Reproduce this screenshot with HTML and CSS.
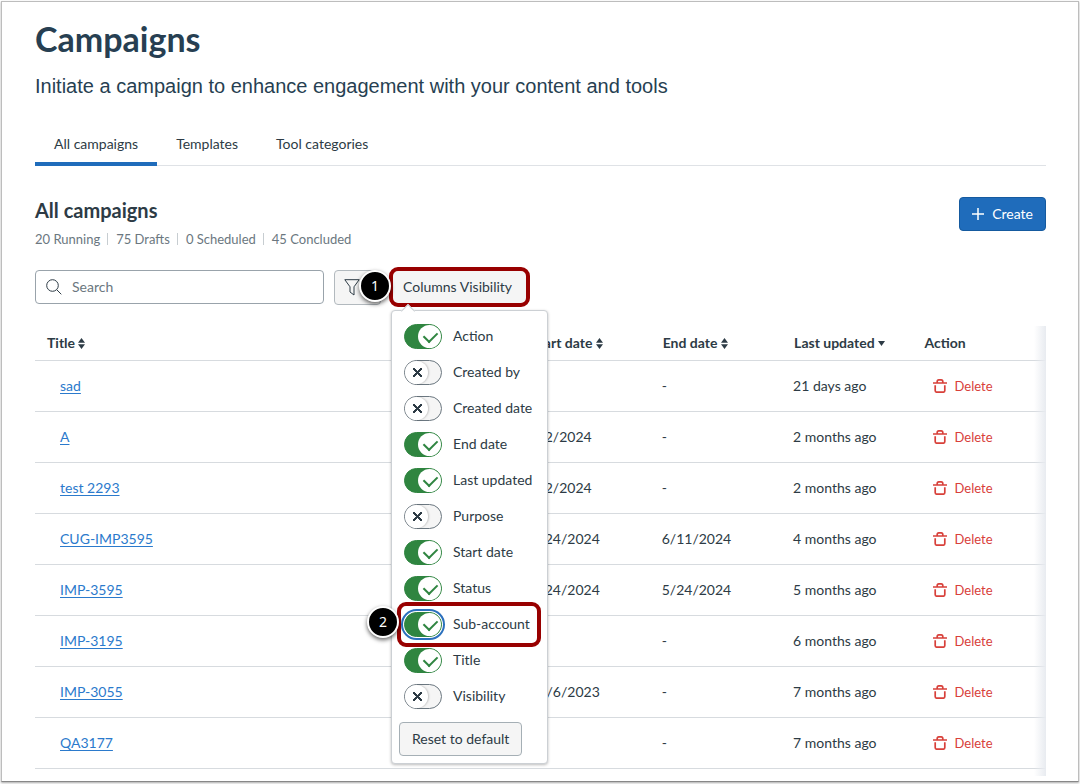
FILE: index.html
```html
<!DOCTYPE html>
<html lang="en">
<head>
<meta charset="utf-8">
<title>Campaigns</title>
<link rel="stylesheet" href="styles.css">
</head>
<body>
<svg class="defs" aria-hidden="true">
  <symbol id="sort" viewBox="0 0 7 11"><path d="M3.500 0 7 4.700H0zM3.500 11 0 6.300h7z"/></symbol>
  <symbol id="trash" viewBox="0 0 14 14"><path d="M0 4h14M4.200 3.800V2.600Q4.200.9 5.800.9h2.400q1.600 0 1.600 1.700v1.200M2.200 6.200v5.200q0 1.800 1.800 1.800h6q1.800 0 1.800-1.800V6.200" fill="none" stroke="currentColor" stroke-width="1.700"/></symbol>
</svg>
<main class="frame">
  <header class="page-head">
    <h1>Campaigns</h1>
    <p class="lead">Initiate a campaign to enhance engagement with your content and tools</p>
  </header>
  <nav class="tabs">
    <a class="tab active" href="#all">All campaigns</a>
    <a class="tab" href="#templates">Templates</a>
    <a class="tab" href="#tools">Tool categories</a>
  </nav>
  <section class="summary">
    <div>
      <h2>All campaigns</h2>
      <ul class="counts"><li>20 Running</li><li>75 Drafts</li><li>0 Scheduled</li><li>45 Concluded</li></ul>
    </div>
    <button class="create" type="button"><svg width="12" height="12" viewBox="0 0 12 12"><path d="M6 0v12M0 6h12" stroke="currentColor" stroke-width="1.500"/></svg>Create</button>
  </section>
  <section class="toolbar">
    <div class="search">
      <svg width="16" height="16" viewBox="0 0 16 16" fill="none" stroke="currentColor"><circle cx="6.500" cy="6.500" r="5.800"/><path d="m10.700 10.700 4.600 4.600"/></svg>
      <input type="text" placeholder="Search" aria-label="Search">
    </div>
    <div class="filter-wrap">
      <button class="filter" type="button" aria-label="Filter"><svg width="16" height="17" viewBox="0 0 16 17" fill="none" stroke="currentColor"><path d="M.8.7h14.400L10 7.800v8.200L6 13V7.800z"/></svg></button>
      <span class="step">1</span>
    </div>
    <div class="columns">
      <button class="columns-button" type="button">Columns Visibility</button>
      <div class="menu">
        <label class="option"><input type="checkbox" checked><span class="switch"></span>Action</label>
        <label class="option"><input type="checkbox"><span class="switch"></span>Created by</label>
        <label class="option"><input type="checkbox"><span class="switch"></span>Created date</label>
        <label class="option"><input type="checkbox" checked><span class="switch"></span>End date</label>
        <label class="option"><input type="checkbox" checked><span class="switch"></span>Last updated</label>
        <label class="option"><input type="checkbox"><span class="switch"></span>Purpose</label>
        <label class="option"><input type="checkbox" checked><span class="switch"></span>Start date</label>
        <label class="option"><input type="checkbox" checked><span class="switch"></span>Status</label>
        <label class="option current"><input type="checkbox" checked><span class="switch"></span>Sub-account<span class="outline"></span><span class="step">2</span></label>
        <label class="option"><input type="checkbox" checked><span class="switch"></span>Title</label>
        <label class="option"><input type="checkbox"><span class="switch"></span>Visibility</label>
        <button class="reset" type="button">Reset to default</button>
      </div>
    </div>
  </section>
  <div class="table-wrap">
    <table>
      <colgroup><col class="c-title"><col class="c-start"><col class="c-end"><col class="c-updated"><col class="c-action"></colgroup>
      <thead><tr>
        <th>Title <svg class="sort"><use href="#sort"/></svg></th>
        <th>Start date <svg class="sort"><use href="#sort"/></svg></th>
        <th>End date <svg class="sort"><use href="#sort"/></svg></th>
        <th>Last updated <svg class="sort down" viewBox="0 0 7 5"><path d="M0 0h7L3.500 5z"/></svg></th>
        <th>Action</th>
      </tr></thead>
      <tbody>
        <tr><td><a href="#c1">sad</a></td><td>-</td><td>-</td><td>21 days ago</td><td><button class="delete" type="button"><svg><use href="#trash"/></svg>Delete</button></td></tr>
        <tr><td><a href="#c2">A</a></td><td>7/2/2024</td><td>-</td><td>2 months ago</td><td><button class="delete" type="button"><svg><use href="#trash"/></svg>Delete</button></td></tr>
        <tr><td><a href="#c3">test 2293</a></td><td>7/2/2024</td><td>-</td><td>2 months ago</td><td><button class="delete" type="button"><svg><use href="#trash"/></svg>Delete</button></td></tr>
        <tr><td><a href="#c4">CUG-IMP3595</a></td><td>5/24/2024</td><td>6/11/2024</td><td>4 months ago</td><td><button class="delete" type="button"><svg><use href="#trash"/></svg>Delete</button></td></tr>
        <tr><td><a href="#c5">IMP-3595</a></td><td>5/24/2024</td><td>5/24/2024</td><td>5 months ago</td><td><button class="delete" type="button"><svg><use href="#trash"/></svg>Delete</button></td></tr>
        <tr><td><a href="#c6">IMP-3195</a></td><td>-</td><td>-</td><td>6 months ago</td><td><button class="delete" type="button"><svg><use href="#trash"/></svg>Delete</button></td></tr>
        <tr><td><a href="#c7">IMP-3055</a></td><td>12/6/2023</td><td>-</td><td>7 months ago</td><td><button class="delete" type="button"><svg><use href="#trash"/></svg>Delete</button></td></tr>
        <tr><td><a href="#c8">QA3177</a></td><td>-</td><td>-</td><td>7 months ago</td><td><button class="delete" type="button"><svg><use href="#trash"/></svg>Delete</button></td></tr>
      </tbody>
    </table>
  </div>
</main>
</body>
</html>
```
FILE: styles.css
```css
* { box-sizing: border-box; }
body { margin: 0; font: 14px/20px Lato, sans-serif; color: #2d3b45; background: #fff; }
button, input { font: inherit; color: inherit; }
.defs { display: none; }
.frame { margin: 1px 1px 2px; padding: 0 32px 5px 33px; border: 1px solid #bdbdbd; border-bottom-color: #888; box-shadow: 0 1px 2px #aaa; }
h1 { margin: 0; padding-top: 13px; font-size: 34px; line-height: 48px; font-weight: 700; color: #273f52; }
.lead { margin: 11px 0 0; font: 20px/24px "Liberation Sans", Arial, sans-serif; color: #273f52; }
.tabs { display: flex; margin-top: 29px; border-bottom: 1px solid #dfe2e6; }
.tab { padding: 7px 19px 8px; border-bottom: 4px solid transparent; margin-bottom: -1px; color: inherit; text-decoration: none; }
.tab.active { border-color: #1f6cbb; }
.summary { display: flex; justify-content: space-between; align-items: center; margin-top: 31px; }
h2 { margin: 0; font-size: 20px; line-height: 24px; }
.counts { display: flex; margin: 9px 0 0; padding: 0; list-style: none; font-size: 13px; line-height: 16px; color: #6b7780; }
.counts li + li { margin-left: 7px; padding-left: 9px; background: linear-gradient(#c7cdd1, #c7cdd1) left center / 1px 12px no-repeat; }
.create { display: flex; align-items: center; gap: 8px; height: 34px; padding: 0 12px; margin-bottom: 16px; border: 1px solid #155a9f; border-radius: 4px; background: #1f6cbb; color: #fff; }
.toolbar { display: flex; align-items: center; margin-top: 20px; height: 40px; }
.search { display: flex; align-items: center; gap: 10px; width: 289px; height: 34px; padding: 0 10px; border: 1px solid #99a3ab; border-radius: 4px; }
.search input { flex: 1; min-width: 0; padding: 0; border: 0; outline: 0; background: none; }
.search input::placeholder { color: #6b7780; opacity: 1; }
.filter-wrap { position: relative; margin-left: 10px; width: 47px; }
.filter { display: flex; align-items: center; width: 47px; height: 35px; padding: 0 9px; border: 1px solid #b2b9be; border-radius: 4px; background: #f5f5f5; }
.step { position: absolute; width: 32px; height: 32px; border: 2px solid #fff; border-radius: 50%; background: #000; color: #fff; font: 14px/27px "Noto Sans", sans-serif; text-align: center; box-shadow: 0 2px 4px #0009; z-index: 3; }
.filter-wrap .step { left: 25px; top: 0; }
.columns { position: relative; margin-left: 8px; }
.columns-button { display: block; height: 40px; padding: 0 14px 0 10px; border: 4px solid #980000; border-radius: 9px; background: #f5f5f5; white-space: nowrap; }
.menu { position: absolute; left: 2px; top: 43px; z-index: 2; width: 157px; padding: 7px; border: 1px solid #ccd0d4; border-radius: 4px; background: #fff; box-shadow: 0 1px 3px #0004; }
.menu::before { content: ""; position: absolute; left: 11px; top: -5px; width: 9px; height: 9px; border: solid #ccd0d4; border-width: 1px 0 0 1px; background: #fff; transform: rotate(45deg); }
.option { position: relative; display: flex; align-items: center; gap: 11px; height: 36px; padding-left: 5px; white-space: nowrap; }
.option input { position: absolute; left: 5px; width: 38px; height: 25px; margin: 0; opacity: 0; }
.switch { position: relative; width: 38px; height: 25px; border: 1px solid #6b7780; border-radius: 13px; background: #f5f5f5; }
.switch::before { content: ""; position: absolute; inset: 0 auto 0 0; width: 23px; border-radius: 50%; background: #fff; box-shadow: 1px 0 2px #0003; }
.switch::after { content: ""; position: absolute; left: 8px; top: 7px; width: 9px; height: 9px; background: linear-gradient(45deg, transparent 42%, #2d3b45 42% 58%, transparent 58%), linear-gradient(-45deg, transparent 42%, #2d3b45 42% 58%, transparent 58%); }
input:checked + .switch { border-color: #2f8540; background: #2f8540; }
input:checked + .switch::before { left: 13px; box-shadow: none; }
input:checked + .switch::after { left: 19px; top: 6px; width: 11px; height: 7px; border: solid #2f8540; border-width: 0 0 2px 2px; background: none; transform: rotate(-45deg); }
.current .switch { outline: 2px solid #2b70bd; outline-offset: 1px; }
.outline { position: absolute; left: -2px; top: -4px; width: 144px; height: 45px; border: 4px solid #980000; border-radius: 9px; }
.option .step { left: -32px; top: 0; }
.reset { display: block; height: 34px; margin-top: 8px; padding: 0 12px; border: 1px solid #a5afb5; border-radius: 4px; background: #f5f5f5; white-space: nowrap; }
.table-wrap { position: relative; margin-top: 19px; padding-bottom: 7px; }
.table-wrap::after { content: ""; position: absolute; inset: 0 0 0 auto; width: 12px; background: linear-gradient(to right, #e8ebf000, #e8ebf0); pointer-events: none; }
table { width: 100%; table-layout: fixed; border-collapse: separate; border-spacing: 0; }
.c-title { width: 47.9%; }
.c-start { width: 13%; }
.c-end { width: 13%; }
.c-updated { width: 12.9%; }
th { height: 35px; padding: 0 0 0 12px; border-bottom: 1px solid #d7dbdf; text-align: left; font-weight: 700; white-space: nowrap; }
td { height: 51px; padding: 0 0 0 11px; border-bottom: 1px solid #d7dbdf; white-space: nowrap; }
td:first-child { padding-left: 25px; }
td a { color: #2b7acc; text-underline-offset: 2px; }
.sort { width: 7px; height: 11px; fill: currentColor; vertical-align: -1px; }
.sort.down { height: 5px; vertical-align: 2px; }
.delete { display: flex; align-items: center; gap: 8px; padding: 0 0 0 9px; border: 0; background: none; color: #d8403a; font-size: 13px; }
.delete svg { width: 14px; height: 14px; }
```
